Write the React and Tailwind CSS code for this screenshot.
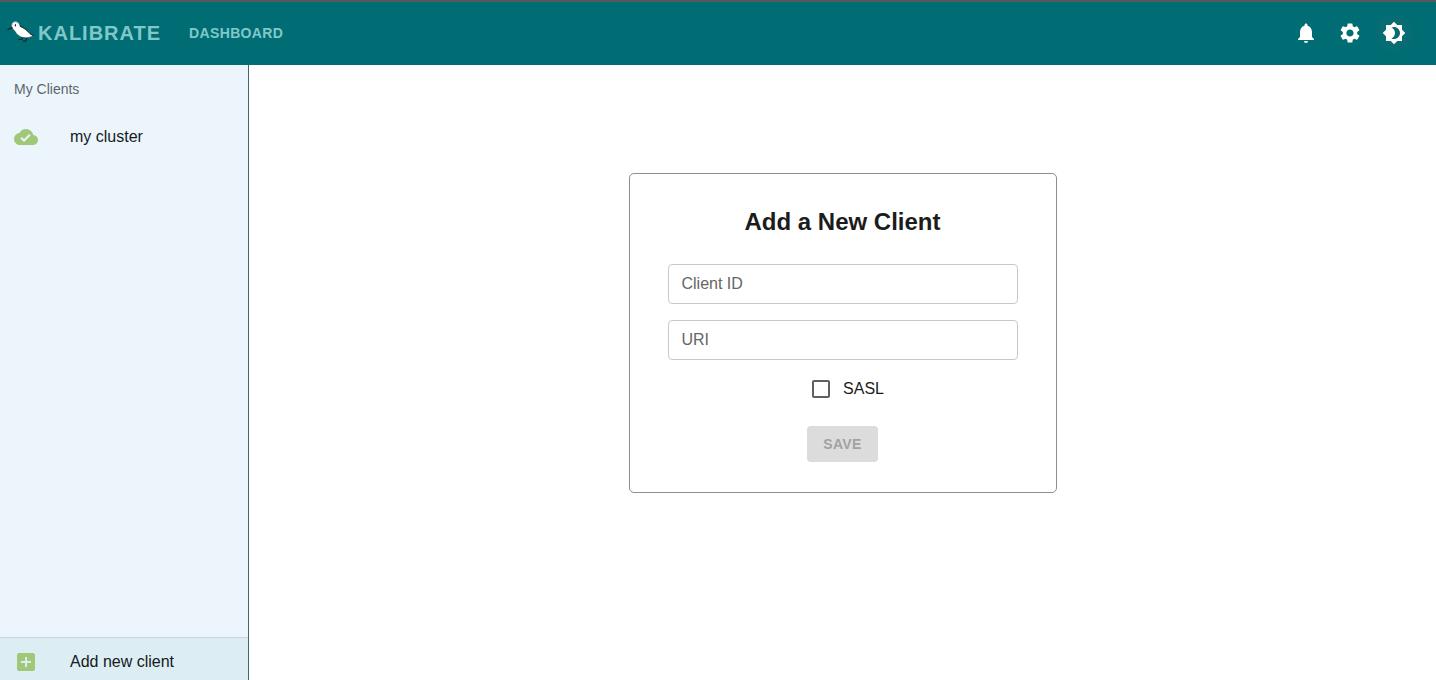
import { useState } from 'react';
import {
  MdAddBox,
  MdBrightness4,
  MdCheckBox,
  MdCheckBoxOutlineBlank,
  MdCloudDone,
  MdNotifications,
  MdSettings,
} from 'react-icons/md';

function BirdLogo() {
  return (
    <svg viewBox="0 0 28 24" className="h-6 w-7 shrink-0" aria-hidden="true">
      <path d="M17 16.500l-1.500 2h-3M21 16.500l-1.200 3.700-3.200-.2" stroke="#10242a" strokeWidth="1.200" fill="none" />
      <path
        d="M6 7.200C5 4.200 5.600.8 9 .6c3.200 0 4.700 2 5 4.600C18 6.600 21.800 9.800 24 12.600l3.600 2.300-3.600 1.300c-4.500 1.200-9.500.5-12-2.200C9.600 12.300 9.400 9.800 6 7.200z"
        fill="#fff"
        stroke="#10242a"
        strokeWidth=".5"
        strokeLinejoin="round"
      />
      <path d="M6.200 4.600C6.200 2.400 7.200 1 9 1s2.900.9 3.400 2.500" stroke="#a5dfe5" strokeWidth="1" fill="none" />
      <path d="M0 8.600l6-2.600 1.200 1.300-3.500 1-2 1.500.6-1.500z" fill="#10242a" />
      <ellipse cx="9.400" cy="4.200" rx=".6" ry="1.200" fill="#10242a" />
      <path d="M14 5.300C18 6.700 21.800 9.900 24 12.700l3.600 2.200" stroke="#10242a" strokeWidth=".9" fill="none" />
    </svg>
  );
}

function IconButton({ label, icon: Icon, highlighted }) {
  return (
    <button
      type="button"
      aria-label={label}
      className={`flex size-9 items-center justify-center rounded-full text-white ${highlighted ? 'bg-[#086c73]' : ''}`}
    >
      <Icon className="size-6" />
    </button>
  );
}

function Header() {
  return (
    <header className="flex h-[65px] shrink-0 items-center border-t-2 border-[#55595b] bg-[#006d75] pr-6 pb-0.5 pl-1.5 font-bold text-[#80c8c8]">
      <a href="#home" className="flex items-center gap-1 text-xl tracking-wider">
        <BirdLogo />
        KALIBRATE
      </a>
      <nav className="ml-7 text-sm tracking-wide">
        <a href="#dashboard">DASHBOARD</a>
      </nav>
      <div className="ml-auto flex gap-2">
        <IconButton label="Notifications" icon={MdNotifications} />
        <IconButton label="Settings" icon={MdSettings} />
        <IconButton label="Toggle theme" icon={MdBrightness4} highlighted />
      </div>
    </header>
  );
}

function Sidebar() {
  return (
    <aside className="flex w-[249px] shrink-0 flex-col border-r border-[#456567] bg-[#ecf5fc]">
      <h2 className="px-3.5 text-sm leading-12 text-[#5f6568]">My Clients</h2>
      <a href="#my-cluster" className="flex h-12 items-center gap-8 px-3.5 text-[#16191b]">
        <MdCloudDone className="size-6 text-[#a0c878]" />
        my cluster
      </a>
      <button
        type="button"
        className="mt-auto flex items-center gap-8 border-t border-[#c8d6dc] bg-[#dcedf4] px-3.5 pt-3 pb-1.5 text-left text-[#16191b]"
      >
        <MdAddBox className="size-6 text-[#a0c878]" />
        Add new client
      </button>
    </aside>
  );
}

// The label rests inside the empty field and hides once there is a value.
function TextField({ id, label }) {
  return (
    <div className="grid w-full items-center">
      <input
        id={id}
        type="text"
        placeholder=" "
        className="peer col-start-1 row-start-1 h-10 w-full rounded-sm border border-[#c8c8c8] px-3.5 text-base text-[#1c1c1c]"
      />
      <label
        htmlFor={id}
        className="pointer-events-none invisible col-start-1 row-start-1 px-3.5 text-[#666666] peer-placeholder-shown:visible"
      >
        {label}
      </label>
    </div>
  );
}

function ClientForm() {
  const [sasl, setSasl] = useState(false);
  const Box = sasl ? MdCheckBox : MdCheckBoxOutlineBlank;

  return (
    <form className="flex w-full max-w-[428px] flex-col items-center rounded-[5px] border border-[#8c8f90] px-[38px] pt-8 pb-[30px]">
      <h1 className="mb-[26px] text-2xl font-bold text-[#1c1c1c]">Add a New Client</h1>
      <div className="flex w-full flex-col gap-4">
        <TextField id="client-id" label="Client ID" />
        <TextField id="uri" label="URI" />
      </div>
      <label htmlFor="sasl" className="mt-2 mb-4 flex h-[42px] items-center gap-2.5 pl-2 text-[#1c1c1c]">
        <span className="grid size-6 place-items-center">
          <input
            id="sasl"
            type="checkbox"
            checked={sasl}
            onChange={(event) => setSasl(event.target.checked)}
            className="col-start-1 row-start-1 size-6 appearance-none"
          />
          <Box className="pointer-events-none col-start-1 row-start-1 size-6 text-[#606060]" />
        </span>
        SASL
      </label>
      <button
        type="submit"
        disabled
        className="h-9 rounded-sm bg-[#dcdcdc] px-4 text-sm font-bold tracking-wide text-[#a2a2a2]"
      >
        SAVE
      </button>
    </form>
  );
}

export default function App() {
  return (
    <div className="flex min-h-screen flex-col bg-white font-['Liberation_Sans',Arial,sans-serif]">
      <Header />
      <div className="flex grow">
        <Sidebar />
        <main className="flex grow items-start justify-center px-6 pt-[108px]">
          <ClientForm />
        </main>
      </div>
    </div>
  );
}
